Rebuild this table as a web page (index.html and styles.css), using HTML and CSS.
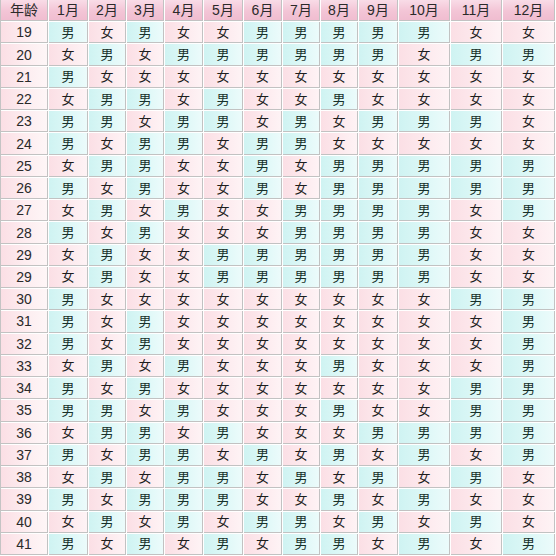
FILE: index.html
```html
<!DOCTYPE html>
<html lang="zh">
<head>
<meta charset="utf-8">
<title>清宫表</title>
<link rel="stylesheet" href="styles.css">
</head>
<body>
<div class="chart">
  <div class="h">年龄</div><div class="h">1月</div><div class="h">2月</div><div class="h">3月</div><div class="h">4月</div><div class="h">5月</div><div class="h">6月</div><div class="h">7月</div><div class="h">8月</div><div class="h">9月</div><div class="h">10月</div><div class="h">11月</div><div class="h">12月</div>

  <div class="a">19</div><div class="m">男</div><div class="f">女</div><div class="m">男</div><div class="f">女</div><div class="f">女</div><div class="m">男</div><div class="m">男</div><div class="m">男</div><div class="m">男</div><div class="m">男</div><div class="f">女</div><div class="f">女</div>
  <div class="a">20</div><div class="f">女</div><div class="m">男</div><div class="f">女</div><div class="m">男</div><div class="m">男</div><div class="m">男</div><div class="m">男</div><div class="m">男</div><div class="m">男</div><div class="f">女</div><div class="m">男</div><div class="m">男</div>
  <div class="a">21</div><div class="m">男</div><div class="f">女</div><div class="f">女</div><div class="f">女</div><div class="f">女</div><div class="f">女</div><div class="f">女</div><div class="f">女</div><div class="f">女</div><div class="f">女</div><div class="f">女</div><div class="f">女</div>
  <div class="a">22</div><div class="f">女</div><div class="m">男</div><div class="m">男</div><div class="f">女</div><div class="m">男</div><div class="f">女</div><div class="f">女</div><div class="m">男</div><div class="f">女</div><div class="f">女</div><div class="f">女</div><div class="f">女</div>
  <div class="a">23</div><div class="m">男</div><div class="m">男</div><div class="f">女</div><div class="m">男</div><div class="m">男</div><div class="f">女</div><div class="m">男</div><div class="f">女</div><div class="m">男</div><div class="m">男</div><div class="m">男</div><div class="f">女</div>
  <div class="a">24</div><div class="m">男</div><div class="f">女</div><div class="m">男</div><div class="m">男</div><div class="f">女</div><div class="m">男</div><div class="m">男</div><div class="f">女</div><div class="f">女</div><div class="f">女</div><div class="f">女</div><div class="f">女</div>
  <div class="a">25</div><div class="f">女</div><div class="m">男</div><div class="m">男</div><div class="f">女</div><div class="f">女</div><div class="m">男</div><div class="f">女</div><div class="m">男</div><div class="m">男</div><div class="m">男</div><div class="m">男</div><div class="m">男</div>
  <div class="a">26</div><div class="m">男</div><div class="f">女</div><div class="m">男</div><div class="f">女</div><div class="f">女</div><div class="m">男</div><div class="f">女</div><div class="m">男</div><div class="m">男</div><div class="m">男</div><div class="m">男</div><div class="m">男</div>
  <div class="a">27</div><div class="f">女</div><div class="m">男</div><div class="f">女</div><div class="m">男</div><div class="f">女</div><div class="f">女</div><div class="m">男</div><div class="m">男</div><div class="m">男</div><div class="m">男</div><div class="f">女</div><div class="m">男</div>
  <div class="a">28</div><div class="m">男</div><div class="f">女</div><div class="m">男</div><div class="f">女</div><div class="f">女</div><div class="f">女</div><div class="m">男</div><div class="m">男</div><div class="m">男</div><div class="m">男</div><div class="f">女</div><div class="f">女</div>
  <div class="a">29</div><div class="f">女</div><div class="m">男</div><div class="f">女</div><div class="f">女</div><div class="m">男</div><div class="m">男</div><div class="m">男</div><div class="m">男</div><div class="m">男</div><div class="m">男</div><div class="f">女</div><div class="f">女</div>
  <div class="a">29</div><div class="f">女</div><div class="m">男</div><div class="f">女</div><div class="f">女</div><div class="m">男</div><div class="m">男</div><div class="m">男</div><div class="m">男</div><div class="m">男</div><div class="m">男</div><div class="f">女</div><div class="f">女</div>
  <div class="a">30</div><div class="m">男</div><div class="f">女</div><div class="f">女</div><div class="f">女</div><div class="f">女</div><div class="f">女</div><div class="f">女</div><div class="f">女</div><div class="f">女</div><div class="f">女</div><div class="m">男</div><div class="m">男</div>
  <div class="a">31</div><div class="m">男</div><div class="f">女</div><div class="m">男</div><div class="f">女</div><div class="f">女</div><div class="f">女</div><div class="f">女</div><div class="f">女</div><div class="f">女</div><div class="f">女</div><div class="f">女</div><div class="m">男</div>
  <div class="a">32</div><div class="m">男</div><div class="f">女</div><div class="m">男</div><div class="f">女</div><div class="f">女</div><div class="f">女</div><div class="f">女</div><div class="f">女</div><div class="f">女</div><div class="f">女</div><div class="f">女</div><div class="m">男</div>
  <div class="a">33</div><div class="f">女</div><div class="m">男</div><div class="f">女</div><div class="m">男</div><div class="f">女</div><div class="f">女</div><div class="f">女</div><div class="m">男</div><div class="f">女</div><div class="f">女</div><div class="f">女</div><div class="m">男</div>
  <div class="a">34</div><div class="m">男</div><div class="f">女</div><div class="m">男</div><div class="f">女</div><div class="f">女</div><div class="f">女</div><div class="f">女</div><div class="f">女</div><div class="f">女</div><div class="f">女</div><div class="m">男</div><div class="m">男</div>
  <div class="a">35</div><div class="m">男</div><div class="m">男</div><div class="f">女</div><div class="m">男</div><div class="f">女</div><div class="f">女</div><div class="f">女</div><div class="m">男</div><div class="f">女</div><div class="f">女</div><div class="m">男</div><div class="m">男</div>
  <div class="a">36</div><div class="f">女</div><div class="m">男</div><div class="m">男</div><div class="f">女</div><div class="m">男</div><div class="f">女</div><div class="f">女</div><div class="f">女</div><div class="m">男</div><div class="m">男</div><div class="m">男</div><div class="m">男</div>
  <div class="a">37</div><div class="m">男</div><div class="f">女</div><div class="m">男</div><div class="m">男</div><div class="f">女</div><div class="m">男</div><div class="f">女</div><div class="m">男</div><div class="f">女</div><div class="m">男</div><div class="f">女</div><div class="m">男</div>
  <div class="a">38</div><div class="f">女</div><div class="m">男</div><div class="f">女</div><div class="m">男</div><div class="m">男</div><div class="f">女</div><div class="m">男</div><div class="f">女</div><div class="m">男</div><div class="f">女</div><div class="m">男</div><div class="f">女</div>
  <div class="a">39</div><div class="m">男</div><div class="f">女</div><div class="m">男</div><div class="m">男</div><div class="m">男</div><div class="f">女</div><div class="f">女</div><div class="m">男</div><div class="f">女</div><div class="m">男</div><div class="f">女</div><div class="f">女</div>
  <div class="a">40</div><div class="f">女</div><div class="m">男</div><div class="f">女</div><div class="m">男</div><div class="f">女</div><div class="m">男</div><div class="m">男</div><div class="f">女</div><div class="m">男</div><div class="f">女</div><div class="m">男</div><div class="f">女</div>
  <div class="a">41</div><div class="m">男</div><div class="f">女</div><div class="m">男</div><div class="f">女</div><div class="m">男</div><div class="f">女</div><div class="m">男</div><div class="m">男</div><div class="f">女</div><div class="m">男</div><div class="f">女</div><div class="m">男</div>
</div>
</body>
</html>
```

FILE: styles.css
```css
html, body {
  margin: 0;
  padding: 0;
  background: #ffffff;
}

.chart {
  display: grid;
  box-sizing: border-box;
  width: 555px;
  height: 555px;
  grid-template-columns: 47px 39px 37px 37px 38px 39px 38px 37px 37px 39px 51px 51px 1fr;
  grid-template-rows: repeat(25, 1fr);
  gap: 1px;
  background: #ffffff;
  border-left: 1px solid #c4c4c4;
  font-family: "Liberation Sans", "Noto Sans CJK SC", sans-serif;
  font-size: 14px;
  color: #222222;
}

.chart > div {
  display: flex;
  align-items: center;
  justify-content: center;
  border-right: 1px solid #c2c2c2;
  border-bottom: 1px solid #c2c2c2;
  line-height: 1;
}

.h {
  background: linear-gradient(to bottom, #f9dce7 0%, #f3c5d6 55%, #f0bdd0 100%);
  color: #2a2a2a;
}

.a {
  background: linear-gradient(to right, #fbdfe5 0%, #fdedf0 55%, #fef6f7 100%);
  color: #2a2a2a;
}

.f {
  background: linear-gradient(to right, #fbdfe5 0%, #fdeaee 55%, #fef3f5 100%);
  color: #1e1e1e;
  font-size: 13px;
}

.m {
  background: linear-gradient(to right, #cff3f2 0%, #def8f7 55%, #ecfbfb 100%);
  color: #16302a;
  font-size: 13px;
}
```
